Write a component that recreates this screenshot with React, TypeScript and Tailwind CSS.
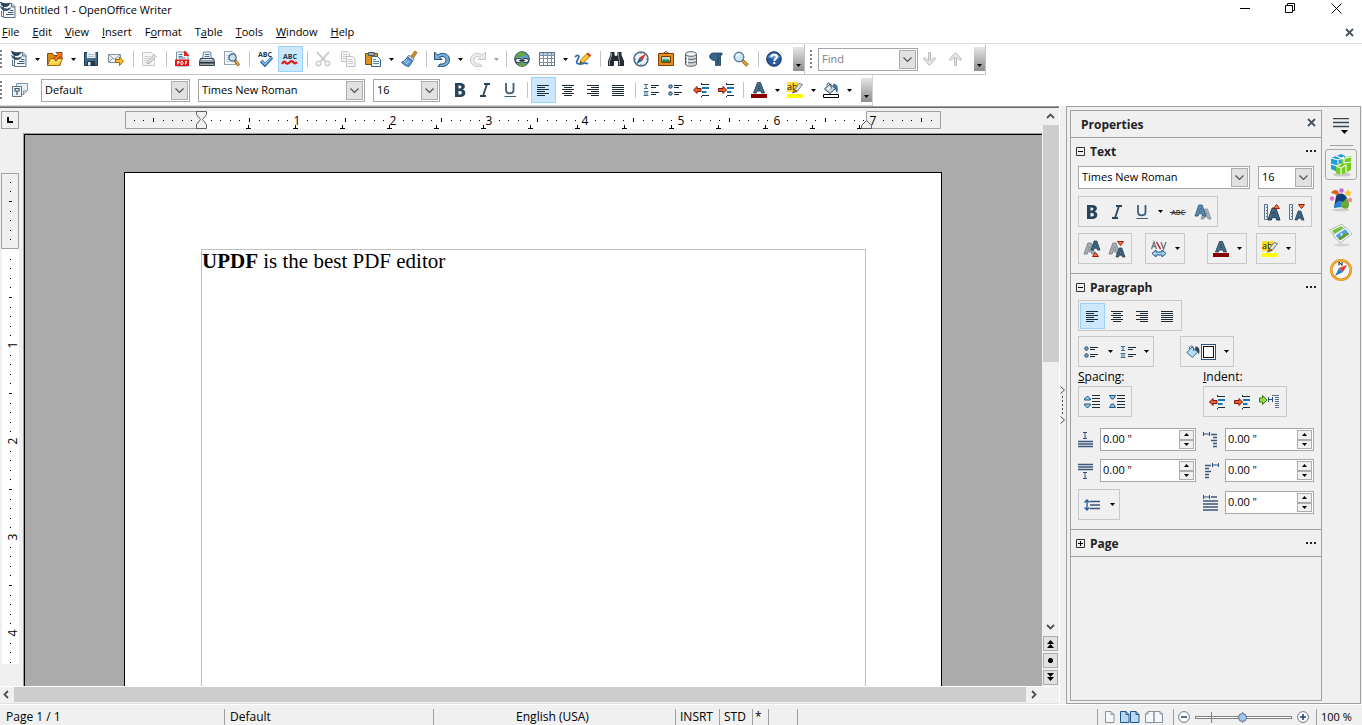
import { useState } from "react";
import type { ReactNode } from "react";
import clsx from "clsx";

const NAVY = "#28455c";
const INK = "#1c2b36";

const Svg = ({ children, w = 16, h = 16 }: { children: ReactNode; w?: number; h?: number }) => (
  <svg width={w} height={h} viewBox={`0 0 ${w} ${h}`} fill="none" className="shrink-0 overflow-visible">
    {children}
  </svg>
);

/* ---------- icons ---------- */

const WriterIcon = () => (
  <Svg>
    <path d="M3.5 1.500h8.500l3 3v11H3.500z" fill="#f4f7f9" stroke="#5b7186" />
    <path d="M11.500 1.500v3.500H15" fill="#c6d3dd" stroke="#5b7186" />
    <path d="M0 0c3 0 4 2 6 2s3-1 4-1c0 2-2 4-5 4C2 5 1 3 0 0z" fill="#2c4457" />
    <path d="M0 4c2 0 3 2.500 6 2.500S10 5 11 5.500c-1 2.500-3 4-6 3.500C2 8.500 1 7 0 4z" fill="#3a566c" />
    <path d="M10 8.500h3.500M8 10.500h5.500M6 12.500h7.500" stroke="#3e5b73" />
    <path d="M1.500 9v5.500h2" stroke="#5b7186" />
  </Svg>
);

const FolderIcon = () => (
  <Svg>
    <path d="M.5 14.500v-12h5l1.500 2h6v10z" fill="#d98c12" stroke="#8a4b08" />
    <path d="M.5 14.500l3-7h12l-3 7z" fill="#ffd34a" stroke="#a8640c" />
    <path d="M2.500 13.500l1.500-4h9" stroke="#fff0a0" />
    <path d="M6.500 8l4.500-4.500-2-2h6v6l-2-2L9 10z" fill="#f47b20" stroke="#8a2a08" strokeWidth=".8" />
  </Svg>
);

const SaveIcon = () => (
  <Svg>
    <path d="M1.500 1.500h13v13h-13z" fill="#446a8a" stroke="#1d3750" />
    <path d="M4 1h8.500v6H4z" fill="#eef3f7" />
    <path d="M5 3.500h6.500M5 5.500h6.500" stroke="#b4c2ce" />
    <path d="M4 10h8v5H4z" fill="#20384e" />
    <path d="M5 11h2.500v3.500H5z" fill="#e9eff4" />
  </Svg>
);

const MailIcon = () => (
  <Svg>
    <path d="M.5 3.500h12v8H.5z" fill="#eef2f5" stroke="#8493a0" />
    <path d="M.5 3.500l6 5 6-5M.5 11.500l4-4M12.500 11.500l-4-4" stroke="#8493a0" />
    <path d="M7.500 8.500h4V6l4 4.200-4 4.300v-3h-4z" fill="#ffbe2e" stroke="#9c5a06" strokeWidth=".9" />
  </Svg>
);

const EditIcon = () => (
  <Svg>
    <path d="M1.500 1.500h9l3 3v10h-12z" fill="#f6f6f6" stroke="#cacaca" />
    <path d="M3.500 5.500h6M3.500 7.500h5M3.500 9.500h3M3.500 11.500h3" stroke="#d2d2d2" />
    <path d="M6 13l1-3 6-6.500 2 2L9 12z" fill="#ddd" stroke="#b5b5b5" />
  </Svg>
);

const PdfIcon = () => (
  <Svg>
    <path d="M2.500 1h8l3.500 3.500V15H2.500z" fill="#f5f8fa" stroke="#7791a6" />
    <path d="M10 0h1.500L15 4v1h-5z" fill="#d92a2a" />
    <path d="M4.500 3.500h4M4.500 5.500h4M4.500 7h7" stroke="#4878a0" />
    <path d="M1 8.500h14V15H1z" fill="#e01515" />
    <path d="M3.500 13.500v-3H5v1.500H3.500M7 10.500v3h1.500l.5-1v-1l-.5-1zM11.500 13.500v-3H13M11.500 12H13" stroke="#fff" />
  </Svg>
);

const PrinterIcon = () => (
  <Svg>
    <path d="M3.500 8l1-7h7l1 7z" fill="#e7f0f7" stroke="#6b8599" />
    <path d="M6 3.500h4.500M5.500 5.500h5" stroke="#4478a8" />
    <path d="M1.500 7.500h13l1 3v4H.5v-4z" fill="#9aa3ab" stroke="#3a464f" />
    <path d="M1 11h14v1.500H1z" fill="#29343c" />
    <path d="M12 13h2v1h-2z" fill="#9be04a" />
    <path d="M3 8.500h10" stroke="#dfe4e8" />
  </Svg>
);

const PreviewIcon = () => (
  <Svg>
    <path d="M.5.5h8l3 3v10H.5z" fill="#f5f8fa" stroke="#8fa0ae" />
    <path d="M2.500 4.500h3M2.500 6.500h2M2.500 8.500h2M2.500 10.500h3" stroke="#b4c4d0" />
    <circle cx="8.500" cy="6.500" r="3.600" fill="#c5e0f3" stroke="#47657e" strokeWidth="1.300" />
    <path d="M11 9.500l4 5" stroke="#8a5a14" strokeWidth="3" />
    <path d="M11.500 9.800l3.300 4.200" stroke="#e9b94a" strokeWidth="1.300" />
  </Svg>
);

const AbcIcon = ({ wave }: { wave?: boolean }) => (
  <Svg>
    <text x="8" y={wave ? 8 : 6} fontSize="7" fontWeight="700" textAnchor="middle" fill="#20384e" fontFamily="Open Sans, sans-serif">
      ABC
    </text>
    {wave ? (
      <path d="M0 13c2-4 3-2 4-1s2 1 4-1 3 0 4 1 2 0 3-1" stroke="#e01a10" strokeWidth="2.200" />
    ) : (
      <>
        <path d="M4 10l4 4 7-7.500" stroke="#1d5d9c" strokeWidth="3.200" />
        <path d="M4.500 10.300L8 13.600l6.500-7" stroke="#8cc4f4" strokeWidth="1.400" />
      </>
    )}
  </Svg>
);

const CutIcon = () => (
  <Svg>
    <path d="M2 1l9 10M14 1L5 11" stroke="#c6c6c6" strokeWidth="1.800" />
    <circle cx="3.500" cy="12.500" r="2.200" stroke="#cdcdcd" strokeWidth="1.500" />
    <circle cx="12.500" cy="12.500" r="2.200" stroke="#cdcdcd" strokeWidth="1.500" />
  </Svg>
);

const CopyIcon = () => (
  <Svg>
    <path d="M1.500.5h6l2 2v8h-8z" fill="#f5f5f5" stroke="#c8c8c8" />
    <path d="M3 3.500h4M3 5.500h4M3 7.500h3" stroke="#d0d0d0" />
    <path d="M6.500 5.500h6l2.500 2.500v7.500H6.500z" fill="#f8f8f8" stroke="#c0c0c0" />
    <path d="M8 8.500h4M8 10.500h5M8 12.500h5" stroke="#cacaca" />
  </Svg>
);

const PasteIcon = () => (
  <Svg>
    <path d="M.5 2.500h12v11H.5z" fill="#d99422" stroke="#7d4b08" />
    <path d="M3.500 1.500h6v3h-6z" fill="#9aa5ad" stroke="#4b565e" />
    <path d="M6.500 5.500h6l3 3v7h-9z" fill="#eff6fb" stroke="#44647e" />
    <path d="M8 8.500h3M8 10.500h6M8 12.500h6" stroke="#5d8bb0" />
  </Svg>
);

const BrushIcon = () => (
  <Svg>
    <path d="M10 5l4-5 2 1.500L12.500 7z" fill="#d98f25" stroke="#7d4a08" strokeWidth=".7" />
    <path d="M8 4l5 4-1.500 2L6.500 6z" fill="#c9d3da" stroke="#5c6b76" strokeWidth=".7" />
    <path d="M6.500 6l5 4-3.500 5.500c-2 0-5-1-7.500-4.500 2 0 4-2 6-5z" fill="#5b9bd8" stroke="#1e5083" strokeWidth=".9" />
    <path d="M3 11l3-2M5 13l3-3" stroke="#bddcf5" />
  </Svg>
);

const UndoIcon = ({ off }: { off?: boolean }) => (
  <svg width="16" height="16" viewBox="0 0 16 16" fill="none" className={clsx("shrink-0", off && "-scale-x-100")}>
    <path
      d="M.5 1v7.500H8L5.500 6c3-1.500 6.500 0 6.500 3s-3 4.500-6 4L4 15.500c6 1 11.500-1 11.500-7C15.500 3 9 .5 3.500 4z"
      fill={off ? "#ececec" : "#78afdc"}
      stroke={off ? "#c6c6c6" : "#1d4b74"}
    />
  </svg>
);

const GlobeIcon = () => (
  <Svg>
    <circle cx="8" cy="8" r="7.300" fill="#5f9cc8" stroke="#23445c" />
    <path d="M3 3c2-2 6-2.500 9 0l-1 2-3-1-2 2-4 1zM4 14c3 2 6 1 8 0l-2-2-4-1z" fill="#67a838" />
    <rect x="1.500" y="7.500" width="6" height="4" rx="2" fill="#e8edf1" stroke="#27333d" />
    <rect x="8.500" y="7.500" width="6" height="4" rx="2" fill="#e8edf1" stroke="#27333d" />
    <path d="M5 9.500h6" stroke="#27333d" />
  </Svg>
);

const TableIcon = () => (
  <Svg>
    <path d="M.5 1.500h15v13H.5z" fill="#fff" stroke="#5c7389" />
    <path d="M1 2h14v2.500H1z" fill="#b9cddd" />
    <path d="M.5 4.500h15M.5 7.500h15M.5 11.500h15M4.500 2v12M8.500 2v12M12.500 2v12" stroke="#7c91a4" />
  </Svg>
);

const DrawIcon = () => (
  <Svg>
    <path d="M0 6c3-3 5-1 3 2s-2 5 2 5 5-2 8 0" stroke="#2a6fb3" strokeWidth="1.800" />
    <path d="M5 12l1-3.500L12.500 2l3 3L8.500 11.500z" fill="#ffc62e" stroke="#a05a08" strokeWidth=".8" />
    <path d="M11.500 3l3 3 1.500-1.500-2.500-3z" fill="#e33a24" />
    <path d="M5 12l.5-2 1.500 1.500z" fill="#222" />
  </Svg>
);

const BinocularsIcon = () => (
  <Svg>
    <path d="M2.500 1h4v3l1 1h1l1-1V1h4v3l2.500 6v5H10v-5H6v5H0v-5l2.500-6z" fill="#252d33" />
    <path d="M3.500 2v3l-2 5v4M10.500 2v3l1 5v4" stroke="#8d9aa4" />
  </Svg>
);

const CompassIcon = () => (
  <Svg>
    <circle cx="8" cy="8" r="7" fill="#eaf3fa" stroke="#53697a" strokeWidth="1.500" />
    <path d="M13 2.500L6.500 6.500l3 3z" fill="#e1301c" />
    <path d="M3 13.500L6.500 6.500l3 3z" fill="#2864a0" />
    <path d="M8 1.500v1.500M8 13v1.500M1.500 8H3M13 8h1.500" stroke="#53697a" />
  </Svg>
);

const PictureIcon = () => (
  <Svg>
    <path d="M5 2.500L8 .5l3 2" stroke="#6b3b08" />
    <path d="M.5 2.500h15v12H.5z" fill="#e98c1c" stroke="#7d3d05" />
    <path d="M3.500 5.500h9v6h-9z" fill="#aadcf8" stroke="#7d3d05" />
    <path d="M4 11V9.500l2-1.500 2 1 2-1 2 2v1z" fill="#2f8a3a" />
    <path d="M9 6h2v1.500H9z" fill="#ffe14d" />
  </Svg>
);

const DatabaseIcon = () => (
  <Svg>
    <path d="M2.500 3v10c0 3 11 3 11 0V3" fill="#d5d9dc" stroke="#59646c" />
    <ellipse cx="8" cy="3" rx="5.500" ry="2.300" fill="#f3f5f6" stroke="#59646c" />
    <path d="M2.500 6.500c0 2.500 11 2.500 11 0M2.500 10c0 2.500 11 2.500 11 0" stroke="#59646c" />
    <path d="M4.500 6v8" stroke="#fff" />
  </Svg>
);

const PilcrowIcon = () => (
  <Svg>
    <path d="M14 2v2h-1.500v10.500h-2V4H9.500v10.500h-2V9.500C0 9.500 0 2 6 2z" fill="#34658f" stroke="#1c3a55" strokeWidth=".8" />
  </Svg>
);

const ZoomIcon = () => (
  <Svg>
    <circle cx="6" cy="6" r="4.700" fill="#cbe6f8" stroke="#5d7e99" strokeWidth="1.500" />
    <path d="M3.500 5.500c.5-1.500 1.500-2 3-2" stroke="#fff" strokeWidth="1.300" />
    <path d="M9.500 9.500l5 5" stroke="#9a5e0c" strokeWidth="3.200" />
    <path d="M10 10l4.300 4.300" stroke="#f0b63c" strokeWidth="1.500" />
  </Svg>
);

const HelpIcon = () => (
  <Svg>
    <circle cx="8" cy="8" r="7.300" fill="#285c9e" stroke="#122f5c" />
    <path d="M2 6c1-4 11-4 12 0-3 2-9 2-12 0z" fill="#6f9fd3" />
    <path d="M5.500 6c0-3.500 5.300-3 5.300 0 0 2-2.500 2-2.500 4M8.300 11v2" stroke="#fff" strokeWidth="2" />
  </Svg>
);

const FindArrow = ({ up }: { up?: boolean }) => (
  <svg width="16" height="16" viewBox="0 0 16 16" fill="none" className={clsx("shrink-0", up && "rotate-180")}>
    <path d="M6.500 1.500h2v8l4-3 1 1.500-6 6.500L1.500 8l1-1.500 4 3z" fill="#e6e6e6" stroke="#bcbcbc" />
  </svg>
);

const StylesIcon = () => (
  <Svg>
    <path d="M4.500 1.500h11v7l-4 4h-7z" fill="#e9f0f5" stroke="#8396a5" />
    <path d="M15 9h-3.500v3.500" stroke="#8396a5" />
    <path d="M.5 4.500h9v10h-9z" fill="#eef3f6" stroke="#5e7588" />
    <path d="M3 6.500h4v2.500H3zM5 9v4" stroke="#3d566a" strokeWidth="1.200" />
  </Svg>
);

const BoldIcon = () => (
  <Svg>
    <path
      d="M3 1h5.500C14 1 14 6.500 10.500 7.500 15 8.500 14 15 8.500 15H3zM6.500 3.500v3h1c2.500 0 2.500-3 0-3zM6.500 9v3.500h1.500c2.500 0 2.500-3.500 0-3.500z"
      fillRule="evenodd"
      fill={NAVY}
    />
  </Svg>
);

const ItalicIcon = () => (
  <Svg>
    <path d="M7 2h6M3 14h6M10 2L6 14" stroke={NAVY} strokeWidth="1.800" />
  </Svg>
);

const UnderlineIcon = () => (
  <Svg>
    <path d="M4 1v7c0 4.500 7.500 4.500 7.500 0V1" stroke="#3f5f78" strokeWidth="1.800" />
    <path d="M2.500 14.500H14" stroke="#3f5f78" />
  </Svg>
);

type Align = "left" | "center" | "right" | "justify";

// every second line is a short one
const shortLine: Record<Align, [number, number]> = {
  left: [2, 10],
  center: [4, 12],
  right: [6, 14],
  justify: [2, 14],
};

const AlignIcon = ({ kind }: { kind: Align }) => (
  <Svg>
    {[0, 1, 2, 3, 4, 5].map((i) => {
      const [a, b] = i % 2 ? shortLine[kind] : [2, 14];
      return <path key={i} d={`M${a} ${3.5 + i * 2}H${b}`} stroke={INK} />;
    })}
  </Svg>
);

const NumberingIcon = () => (
  <Svg>
    <path d="M1 2.500h4M3 2.500v4M1 6.500h4M.5 9.500h5M.5 13.500h5M2 9.500v4M4 9.500v4" stroke="#3f7094" />
    <path d="M8 3.500h8M8 5.500h5M8 10.500h8M8 12.500h5" stroke={INK} />
  </Svg>
);

const BulletsIcon = () => (
  <Svg>
    <circle cx="2.500" cy="4.500" r="1.700" fill="#7fb4d6" stroke="#1e3d55" />
    <circle cx="2.500" cy="11.500" r="1.700" fill="#7fb4d6" stroke="#1e3d55" />
    <path d="M6 3.500h8M6 5.500h5M6 10.500h8M6 12.500h5" stroke={INK} />
  </Svg>
);

const IndentIcon = ({ right }: { right?: boolean }) => (
  <Svg>
    <path d="M8 2.500h8M9 13.500h7M8.500 1v1M8.500 14v1.500" stroke={INK} />
    <path d="M9 5h7v2H9zM9 9h4.500v2H9z" fill="#1278b8" />
    <path d={right ? "M8.500 8L5 4.500v2H.5v3H5v2z" : "M.5 8L4 4.500v2h4v3H4v2z"} fill="#e9622c" stroke="#7d1508" />
  </Svg>
);

const FontColorIcon = () => (
  <Svg>
    <path
      d="M2.500 11L6.500.5h3L13.500 11h-3l-.6-2H6l-.6 2zM7 6.500h2L8 3.500z"
      fillRule="evenodd"
      fill="#46708f"
      stroke="#1e3a50"
      strokeWidth=".8"
    />
    <path d="M0 12h16v4H0z" fill="#870000" />
  </Svg>
);

const HighlightIcon = () => (
  <Svg>
    <path d="M0 0h11v10H0z" fill="#ffdc32" />
    <text x="0" y="8" fontSize="9" fill="#111" fontFamily="Open Sans, sans-serif">
      ab
    </text>
    <path d="M7 8l5-6.500 3.500 1L10.500 9z" fill="#dde3e7" stroke="#5c6872" strokeWidth=".9" />
    <path d="M5.500 11l2-3.500 2.500 2z" fill="#c87a1e" stroke="#5a3108" strokeWidth=".7" />
    <path d="M0 12h16v4H0z" fill="#ff0" />
  </Svg>
);

const FillIcon = () => (
  <Svg>
    <path d="M10.500 2c4 0 4.500 4 3.500 8.500-1-2-1-4-3-4z" fill="#2f7cc0" stroke="#1b4a75" strokeWidth=".6" />
    <path d="M7 2l5.500 4.500L7 11.500 1.500 7z" fill="#c3d0da" stroke="#394b59" />
    <path d="M3.500 7L7 4l1.500 1.200L5 8.500z" fill="#f4f8fa" />
    <path d="M4 3.500c0-4 5-3 4 3" stroke="#394b59" />
    <path d="M.5 12.500h15v3H.5z" fill="#fff" stroke="#000" />
  </Svg>
);

const ParaFillIcon = () => (
  <Svg w={30} h={18}>
    <path d="M9.500 3.500c4 0 4.500 4 3.500 8-1-2-2-4-4-4z" fill="#333f49" />
    <path d="M6 4l5.500 5-5 5.500L.8 9.500z" fill="#b7dcf3" stroke="#3a6a92" />
    <path d="M3.500 6c0-5 5-4 4 2" stroke="#3a6a92" />
    <rect x="15.500" y="1.500" width="14" height="15" fill="#fff" stroke="#2c4f86" />
    <rect x="17.500" y="3.500" width="10" height="11" fill="#fff" stroke="#111" />
  </Svg>
);

const StrikeIcon = () => (
  <Svg>
    <text x="8" y="11" fontSize="7" fontWeight="600" textAnchor="middle" fill="#333" fontFamily="Open Sans, sans-serif">
      ABC
    </text>
    <path d="M0 8.500h16" stroke="#333" />
  </Svg>
);

const LetterShape = ({ x, y, s, fill, stroke }: { x: number; y: number; s: number; fill: string; stroke: string }) => (
  <path
    transform={`translate(${x} ${y}) scale(${s / 10})`}
    d="M0 10L3.500 0h3L10 10H7.200l-.6-2H3.400l-.6 2zM4 6h2L5 3z"
    fillRule="evenodd"
    fill={fill}
    stroke={stroke}
    strokeWidth=".8"
  />
);

const ShadowIcon = () => (
  <Svg>
    <LetterShape x={6} y={5} s={10} fill="#a9b1b8" stroke="#7f8992" />
    <LetterShape x={0} y={1} s={11} fill="#5b8cb4" stroke="#2e5678" />
  </Svg>
);

const GrowIcon = ({ shrink }: { shrink?: boolean }) => (
  <Svg>
    <path d="M.5.500h3v15h-3z" fill="#e4eef4" stroke="#5b7386" />
    <path d="M2 3.500h1.500M2 6.500h1.500M2 9.500h1.500M2 12.500h1.500" stroke="#5b7386" />
    {shrink ? (
      <>
        <LetterShape x={6} y={7} s={9} fill="#3c6787" stroke="#1a364b" />
        <path d="M9.500.5h6l-3 4z" fill="#f4783c" stroke="#9c1c08" />
      </>
    ) : (
      <>
        <LetterShape x={4} y={4} s={12} fill="#3c6787" stroke="#1a364b" />
        <path d="M9.500 4.500l3-4 3 4z" fill="#f4783c" stroke="#9c1c08" />
      </>
    )}
  </Svg>
);

const ScriptIcon = ({ sub }: { sub?: boolean }) => (
  <Svg>
    <LetterShape x={0} y={2} s={11} fill="#a6adb3" stroke="#78828a" />
    <LetterShape x={7} y={sub ? 7 : 0} s={9} fill="#3c6787" stroke="#1a364b" />
    <path d={sub ? "M8.500.5h6l-3 4z" : "M8.500 15.500l3-4 3 4z"} fill="#f4783c" stroke="#9c1c08" />
  </Svg>
);

const SpacingIcon = () => (
  <Svg>
    <path d="M.5 8L3 1l2.500 7M1.500 5.500h3M10 1l2.500 7L15 1" stroke="#6b7780" strokeWidth="1.300" />
    <path d="M5.500 1l4 7" stroke="#c01818" strokeWidth="1.500" />
    <path d="M1 12.500l4-3.500v2h6V9l4 3.500-4 3.500v-2H5v2z" fill="#a9d2f2" stroke="#1f568a" />
  </Svg>
);

const ParaGapIcon = ({ shrink }: { shrink?: boolean }) => (
  <Svg>
    <path d="M8 1.500h8M8 4.500h8M8 7.500h8M8 10.500h8M8 13.500h8" stroke={INK} />
    <path
      d={shrink ? "M.5 1.500h6L4.500 5h-2zM.5 13.500h6L4.500 10h-2z" : "M.5 6h6V5L3.500 2l-3 3zM.5 10h6v1l-3 3-3-3z"}
      fill="#8cc8ea"
      stroke="#1d5580"
    />
  </Svg>
);

const HangingIcon = () => (
  <Svg w={20}>
    <path d="M.5 4h3V1.500L8 6l-4.500 4.500V8h-3z" fill="#9ad850" stroke="#3c7a12" />
    <path d="M9.500 3v5M13.500 3v5M9.500 5.500h4" stroke="#2a4f80" />
    <path d="M13 1.500h7M16 3.500h4M16 5.500h4M16 7.500h4M16 9.500h4M16 11.500h4M16 13.500h4" stroke="#56708c" />
  </Svg>
);

const AboveIcon = ({ below }: { below?: boolean }) => (
  <svg width="16" height="16" viewBox="0 0 16 16" fill="none" className={clsx("shrink-0", below && "-scale-y-100")}>
    <path d="M5 .5h4M5 6.500h4M7 .5v6" stroke="#2c4f86" />
    <path d="M0 9.500h15M0 12h15M0 14.500h15" stroke="#3c5678" strokeWidth="1.400" />
  </svg>
);

const BeforeTextIcon = ({ after }: { after?: boolean }) => (
  <svg width="16" height="16" viewBox="0 0 16 16" fill="none" className={clsx("shrink-0", after && "-scale-x-100")}>
    <path d="M.5 0v4M6.500 0v4M.5 2h6" stroke="#2c4f86" />
    <path d="M8 2.500h6M10 5.500h4M8 8.500h6M10 11.500h4M10 14.500h4" stroke="#3c5678" strokeWidth="1.500" />
  </svg>
);

const FirstLineIcon = () => (
  <Svg>
    <path d="M.5 0v4M6.500 0v4M.5 2h6" stroke="#2c4f86" />
    <path d="M8 2h6M0 6h15M0 9h15M0 12h15M0 15h15" stroke="#3c5678" strokeWidth="1.400" />
  </Svg>
);

const LineGapIcon = () => (
  <Svg>
    <path d="M3 2.500v11M.5 5.500L3 3l2.500 2.500M.5 10.500L3 13l2.500-2.500" stroke="#2c5f9a" strokeWidth="1.400" />
    <path d="M6 4.500h10M6 8h10M6 11.500h10" stroke="#3c5678" strokeWidth="1.500" />
  </Svg>
);

const Chevron = ({ dir = "down" }: { dir?: "down" | "up" | "left" | "right" }) => (
  <svg
    width="9"
    height="9"
    viewBox="0 0 9 9"
    fill="none"
    className={clsx("shrink-0", dir === "up" && "rotate-180", dir === "left" && "rotate-90", dir === "right" && "-rotate-90")}
  >
    <path d="M1 3l3.500 3.500L8 3" stroke="#505050" strokeWidth="1.800" />
  </svg>
);

const CloseX = () => (
  <svg width="9" height="9" viewBox="0 0 9 9">
    <path d="M1 1l7 7M8 1L1 8" stroke="#46525e" strokeWidth="1.800" />
  </svg>
);

/* ---------- controls ---------- */

type BtnProps = { label: string; children: ReactNode; active?: boolean; onClick?: () => void; width?: string };

const ToolButton = ({ label, children, active, onClick, width = "w-[25px]" }: BtnProps) => (
  <button
    type="button"
    aria-label={label}
    aria-pressed={active}
    onClick={onClick}
    className={clsx(
      "flex h-[26px] shrink-0 items-center border pl-[3px]",
      width,
      active ? "border-[#99d1ff] bg-[#cce8ff]" : "border-transparent hover:bg-[#e5f3ff]"
    )}
  >
    {children}
  </button>
);

const MenuArrow = ({ label, off }: { label: string; off?: boolean }) => (
  <button type="button" aria-label={label} className="flex h-[26px] w-[11px] shrink-0 items-center justify-center">
    <svg width="5" height="3" viewBox="0 0 5 3">
      <path d="M0 0h5L2.500 3z" fill={off ? "#a0a0a0" : "#000"} />
    </svg>
  </button>
);

const Sep = () => (
  <span className="flex w-2 shrink-0 justify-center">
    <span className="h-4 w-px bg-[#c4c4c4]" />
  </span>
);

const Grip = ({ className = "" }: { className?: string }) => (
  <span className={clsx("h-[18px] w-0.5 shrink-0 bg-[repeating-linear-gradient(#808080_0_2px,transparent_2px_4px)]", className)} />
);

const Overflow = () => (
  <button
    type="button"
    aria-label="More controls"
    className="flex h-6 w-[11px] shrink-0 items-end justify-center bg-linear-to-b from-[#e6e6e6] to-[#8e8e8e] pb-1"
  >
    <svg width="5" height="3" viewBox="0 0 5 3">
      <path d="M0 0h5L2.500 3z" fill="#000" />
    </svg>
  </button>
);

type ComboProps = { label: string; options: string[]; className: string; muted?: boolean };

const Combo = ({ label, options, className, muted }: ComboProps) => (
  <div className={clsx("relative h-[23px] shrink-0 border border-[#a5a7ac] bg-white", className)}>
    <select
      aria-label={label}
      className={clsx("h-full w-full appearance-none bg-transparent pr-5 pl-[3px] text-[11px] outline-none", muted && "text-[#808080]")}
    >
      {options.map((o) => (
        <option key={o}>{o}</option>
      ))}
    </select>
    <span className="pointer-events-none absolute inset-y-px right-px flex w-[17px] items-center justify-center border border-[#adadad] bg-[#e1e1e1]">
      <svg width="9" height="6" viewBox="0 0 9 6" fill="none">
        <path d="M.5.5l4 4 4-4" stroke="#505050" strokeWidth="1.200" />
      </svg>
    </span>
  </div>
);

const Group = ({ children }: { children: ReactNode }) => (
  <div className="flex h-[31px] w-fit shrink-0 items-center border border-[#c8c8c8] px-px">{children}</div>
);

const Spinner = ({ label, icon }: { label: string; icon: ReactNode }) => {
  const [value, setValue] = useState(0);
  return (
    <div className="flex items-center gap-1.5">
      {icon}
      <div className="flex h-[23px] min-w-0 flex-1 border border-[#a5a7ac] bg-white p-px">
        <input
          aria-label={label}
          value={`${value.toFixed(2)} "`}
          readOnly
          className="w-0 min-w-0 flex-1 pl-px text-[11px] outline-none"
        />
        <div className="flex w-[15px] flex-col">
          {[1, -1].map((step) => (
            <button
              key={step}
              type="button"
              aria-label={`${label} ${step > 0 ? "up" : "down"}`}
              onClick={() => setValue(Math.max(0, value + step * 0.1))}
              className="flex min-h-0 flex-1 items-center justify-center border border-[#adadad] bg-[#f0f0f0]"
            >
              <svg width="5" height="3" viewBox="0 0 5 3">
                <path d={step > 0 ? "M0 3h5L2.500 0z" : "M0 0h5L2.500 3z"} fill="#000" />
              </svg>
            </button>
          ))}
        </div>
      </div>
    </div>
  );
};

const aligns: { kind: Align; label: string }[] = [
  { kind: "left", label: "Align Left" },
  { kind: "center", label: "Centered" },
  { kind: "right", label: "Align Right" },
  { kind: "justify", label: "Justified" },
];

type AlignProps = { align: Align; setAlign: (a: Align) => void };

const AlignButtons = ({ align, setAlign }: AlignProps) =>
  aligns.map((a) => (
    <ToolButton key={a.kind} label={a.label} active={align === a.kind} onClick={() => setAlign(a.kind)}>
      <AlignIcon kind={a.kind} />
    </ToolButton>
  ));

/* ---------- top bars ---------- */

const menus = ["File", "Edit", "View", "Insert", "Format", "Table", "Tools", "Window", "Help"];
const accessKeys: Record<string, number> = { Format: 1, Table: 1 };

const TitleBar = () => (
  <header className="flex h-[22px] shrink-0 items-start justify-between">
    <div className="flex items-center gap-[3px]">
      <WriterIcon />
      <h1 className="text-[11px] leading-5">Untitled 1 - OpenOffice Writer</h1>
    </div>
    <div className="flex">
      <button type="button" aria-label="Minimize" className="flex h-4 w-12 items-center justify-center">
        <span className="h-px w-2.5 bg-black" />
      </button>
      <button type="button" aria-label="Restore" className="flex h-4 w-[42px] items-center justify-center">
        <svg width="10" height="10" viewBox="0 0 10 10" fill="none" stroke="#000">
          <path d="M.5 2.500h7v7h-7zM2.500 2.500v-2h7v7h-2" />
        </svg>
      </button>
      <button type="button" aria-label="Close" className="flex h-4 w-[51px] items-center justify-center">
        <svg width="11" height="11" viewBox="0 0 11 11" stroke="#000">
          <path d="M.5.5l10 10M10.500.5l-10 10" />
        </svg>
      </button>
    </div>
  </header>
);

const MenuBar = () => (
  <nav className="flex h-[22px] shrink-0 items-center justify-between border-b border-[#dcdcdc] pr-2 pl-0.5">
    <div className="flex gap-[13px] text-[11px]">
      {menus.map((m) => {
        const k = accessKeys[m] ?? 0;
        return (
          <button key={m} type="button">
            {m.slice(0, k)}
            <span className="underline">{m[k]}</span>
            {m.slice(k + 1)}
          </button>
        );
      })}
    </div>
    <button type="button" aria-label="Close Document">
      <CloseX />
    </button>
  </nav>
);

const StandardBar = () => {
  const [autoSpell, setAutoSpell] = useState(true);
  return (
    <div className="flex h-[31px] shrink-0">
      <div className="flex items-center border-r border-b border-[#c4c4c4]">
        <Grip className="mr-[5px]" />
        <ToolButton label="New"><WriterIcon /></ToolButton>
        <MenuArrow label="New menu" />
        <ToolButton label="Open"><FolderIcon /></ToolButton>
        <MenuArrow label="Open menu" />
        <ToolButton label="Save"><SaveIcon /></ToolButton>
        <ToolButton label="Document as E-mail"><MailIcon /></ToolButton>
        <Sep />
        <ToolButton label="Edit File"><EditIcon /></ToolButton>
        <Sep />
        <ToolButton label="Export as PDF"><PdfIcon /></ToolButton>
        <ToolButton label="Print"><PrinterIcon /></ToolButton>
        <ToolButton label="Page Preview"><PreviewIcon /></ToolButton>
        <Sep />
        <ToolButton label="Spelling and Grammar"><AbcIcon /></ToolButton>
        <ToolButton label="AutoSpellcheck" active={autoSpell} onClick={() => setAutoSpell(!autoSpell)}>
          <AbcIcon wave />
        </ToolButton>
        <Sep />
        <ToolButton label="Cut"><CutIcon /></ToolButton>
        <ToolButton label="Copy"><CopyIcon /></ToolButton>
        <ToolButton label="Paste"><PasteIcon /></ToolButton>
        <MenuArrow label="Paste menu" />
        <ToolButton label="Format Paintbrush"><BrushIcon /></ToolButton>
        <Sep />
        <ToolButton label="Undo"><UndoIcon /></ToolButton>
        <MenuArrow label="Undo menu" />
        <ToolButton label="Redo"><UndoIcon off /></ToolButton>
        <MenuArrow label="Redo menu" off />
        <Sep />
        <ToolButton label="Hyperlink"><GlobeIcon /></ToolButton>
        <ToolButton label="Table"><TableIcon /></ToolButton>
        <MenuArrow label="Table menu" />
        <ToolButton label="Show Draw Functions"><DrawIcon /></ToolButton>
        <Sep />
        <ToolButton label="Find and Replace"><BinocularsIcon /></ToolButton>
        <ToolButton label="Navigator"><CompassIcon /></ToolButton>
        <ToolButton label="Gallery"><PictureIcon /></ToolButton>
        <ToolButton label="Data Sources"><DatabaseIcon /></ToolButton>
        <ToolButton label="Nonprinting Characters"><PilcrowIcon /></ToolButton>
        <ToolButton label="Zoom"><ZoomIcon /></ToolButton>
        <Sep />
        <ToolButton label="Help"><HelpIcon /></ToolButton>
        <span className="w-1.5" />
        <Overflow />
      </div>
      <div className="flex items-center border-r border-b border-[#c4c4c4] pl-[5px]">
        <Grip className="mr-1.5" />
        <div className="pt-px">
          <Combo label="Find" options={["Find"]} className="w-[100px]" muted />
        </div>
        <ToolButton label="Find Next"><FindArrow /></ToolButton>
        <ToolButton label="Find Previous"><FindArrow up /></ToolButton>
        <span className="w-1.5" />
        <Overflow />
      </div>
    </div>
  );
};

const FormattingBar = ({ align, setAlign }: AlignProps) => (
  <div className="flex h-[31px] shrink-0">
    <div className="flex items-center border-r border-b border-[#d4d4d4]">
      <Grip className="mr-1.5" />
      <ToolButton label="Styles and Formatting"><StylesIcon /></ToolButton>
      <div className="flex gap-2 px-2 pt-px">
        <Combo label="Apply Style" options={["Default"]} className="w-[149px]" />
        <Combo label="Font Name" options={["Times New Roman"]} className="w-[167px]" />
        <Combo label="Font Size" options={["16"]} className="w-[67px]" />
      </div>
      <ToolButton label="Bold"><BoldIcon /></ToolButton>
      <ToolButton label="Italic"><ItalicIcon /></ToolButton>
      <ToolButton label="Underline"><UnderlineIcon /></ToolButton>
      <Sep />
      <AlignButtons align={align} setAlign={setAlign} />
      <Sep />
      <ToolButton label="Numbering On/Off"><NumberingIcon /></ToolButton>
      <ToolButton label="Bullets On/Off"><BulletsIcon /></ToolButton>
      <ToolButton label="Decrease Indent"><IndentIcon /></ToolButton>
      <ToolButton label="Increase Indent"><IndentIcon right /></ToolButton>
      <Sep />
      <ToolButton label="Font Color"><FontColorIcon /></ToolButton>
      <MenuArrow label="Font Color menu" />
      <ToolButton label="Highlighting"><HighlightIcon /></ToolButton>
      <MenuArrow label="Highlighting menu" />
      <ToolButton label="Background Color"><FillIcon /></ToolButton>
      <MenuArrow label="Background Color menu" />
      <span className="w-1.5" />
      <Overflow />
    </div>
  </div>
);

/* ---------- document ---------- */

const INCH = 96;

const tenths = (from: number, to: number) => {
  const list: number[] = [];
  for (let i = from; i <= to; i++) list.push(i);
  return list;
};

const HorizontalRuler = () => (
  <svg width="816" height="19" viewBox="0 0 816 19" className="shrink-0" fontSize="12">
    <path d="M76 0h666v18H76z" fill="#fff" />
    <path d="M.5.500h76v17H.5zM741.500.500h74v17h-74z" fill="#f0f0f0" stroke="#a0a0a0" />
    {tenths(-7, 76).map((i) => {
      const x = Math.round(76 + (i * INCH) / 10);
      if (i % 10 === 0)
        return i > 0 ? (
          <text key={i} x={x} y="14" textAnchor="middle">
            {i / 10}
          </text>
        ) : null;
      return i % 5 === 0 ? <path key={i} d={`M${x} 7h1v4h-1z`} /> : <path key={i} d={`M${x} 9h1v1h-1z`} />;
    })}
    {tenths(1, 14).map((i) => (
      <path key={i} d={`M${76 + i * 47} 14h1v3h2v1h-5v-1h2z`} />
    ))}
    <path d="M71.500.500h10v3l-4 5 4 5v4h-10v-4l4-5-4-5zM741.500 9.500l5 5v3h-10v-3z" fill="#f0f0f0" stroke="#606060" />
  </svg>
);

const VerticalRuler = () => (
  <svg width="18" height="491" viewBox="0 0 18 491" className="shrink-0 overflow-visible" fontSize="12">
    <path d="M1 76h17v415H1z" fill="#fff" />
    <path d="M.5.500h17v75H.5z" fill="#f0f0f0" stroke="#a0a0a0" />
    {tenths(-7, 43).map((i) => {
      const y = Math.round(76 + (i * INCH) / 10);
      if (i === 0) return null;
      if (i % 10 === 0)
        return (
          <text key={i} x="16" y={y} textAnchor="middle" transform={`rotate(-90 16 ${y})`}>
            {i / 10}
          </text>
        );
      return i % 5 === 0 ? <path key={i} d={`M8 ${y}h3v1H8z`} /> : <path key={i} d={`M9 ${y}h1v1H9z`} />;
    })}
  </svg>
);

const navButtons = [
  { label: "Previous Page", d: "M1 5h7L4.500 1zM1 9h7L4.500 5z" },
  { label: "Navigation", d: "M2 3.500L3.500 2h2L7 3.500v2L5.500 7h-2L2 5.500z" },
  { label: "Next Page", d: "M1 0h7L4.500 4zM1 4h7L4.500 8z" },
];

const DocumentArea = () => (
  <section className="flex min-w-0 flex-1 flex-col border-t border-[#a0a0a0]">
    <div className="flex min-h-0 flex-1 border-t border-[#696969]">
      <div className="flex min-w-0 flex-1 flex-col">
        <div className="flex h-[25px] shrink-0 items-start">
          <button
            type="button"
            aria-label="Tab Type"
            className="mt-[3px] ml-px flex h-[18px] w-[18px] shrink-0 items-center justify-center border border-[#a0a0a0]"
          >
            <svg width="6" height="6" viewBox="0 0 6 6">
              <path d="M0 0h2v4h4v2H0z" fill="#000" />
            </svg>
          </button>
          <div className="mt-[3px] ml-1.5 flex min-w-0 flex-1 justify-center overflow-hidden pr-px">
            <HorizontalRuler />
          </div>
        </div>
        <div className="flex min-h-0 flex-1">
          <div className="w-[23px] shrink-0 overflow-hidden pt-10 pl-px">
            <VerticalRuler />
          </div>
          <div className="flex min-w-0 flex-1 overflow-hidden border-t border-l border-[#a0a0a0]">
            <div className="flex min-w-0 flex-1 justify-center border-t border-l border-black bg-[#ababab] pt-[37px] pr-px">
              <article className="h-[1058px] w-[818px] shrink-0 border border-black bg-white pt-[76px] pr-[75px] pl-[76px]">
                <div className="h-[900px] border border-[#c0c0c0]">
                  <p className="font-['Liberation_Serif',serif] text-[21px] leading-[22px]">
                    <strong>UPDF</strong> is the best PDF editor
                  </p>
                </div>
              </article>
            </div>
          </div>
        </div>
      </div>
      <div className="flex w-[17px] shrink-0 flex-col items-center pb-px">
        <button type="button" aria-label="Scroll up" className="flex h-[17px] w-[17px] shrink-0 items-center justify-center">
          <Chevron dir="up" />
        </button>
        <div className="flex-1 self-stretch pl-px">
          <div className="h-[48%] bg-[#cdcdcd]" />
        </div>
        <button type="button" aria-label="Scroll down" className="flex h-[17px] w-[17px] shrink-0 items-center justify-center">
          <Chevron />
        </button>
        <div className="flex flex-col gap-0.5 pt-px">
          {navButtons.map((b) => (
            <button
              key={b.label}
              type="button"
              aria-label={b.label}
              className="flex h-[15px] w-[15px] items-center justify-center border border-[#adadad] bg-[#e1e1e1]"
            >
              <svg width="9" height="9" viewBox="0 0 9 9">
                <path d={b.d} />
              </svg>
            </button>
          ))}
        </div>
      </div>
    </div>
    <div className="flex h-[18px] shrink-0 items-start border-t border-b border-t-white border-b-[#e2e2e2]">
      <button type="button" aria-label="Scroll left" className="flex h-[15px] w-[14px] items-center justify-center pr-px">
        <Chevron dir="left" />
      </button>
      <div className="h-[15px] flex-1 bg-[#cdcdcd]" />
      <button type="button" aria-label="Scroll right" className="mr-[18px] flex h-[15px] w-[15px] items-center justify-center">
        <Chevron dir="right" />
      </button>
    </div>
  </section>
);

const Splitter = () => (
  <div className="flex w-[7px] shrink-0 items-center border-l border-white">
    <button type="button" aria-label="Hide sidebar">
      <svg width="5" height="38" viewBox="0 0 5 38" fill="none" stroke="#505050">
        <path d="M.5.500l4 3.500-4 3.500M.5 30.500l4 3.500-4 3.500" />
        <path d="M2.500 10v19" strokeDasharray="2 2" />
      </svg>
    </button>
  </div>
);

/* ---------- sidebar ---------- */

const SectionHeader = ({ title, open }: { title: string; open?: boolean }) => (
  <div className="flex h-[26px] items-center justify-between pr-[5px] pl-[5px]">
    <h3 className="flex items-center gap-[5px] font-bold text-[#222]">
      <svg width="9" height="9" viewBox="0 0 9 9" fill="none" stroke="#333">
        <path d="M.5.500h8v8h-8z" />
        <path d={open ? "M2 4.500h5" : "M2 4.500h5M4.500 2v5"} stroke="#000" />
      </svg>
      <span className="pt-px">{title}</span>
    </h3>
    <button type="button" aria-label={`${title} options`} className="flex gap-0.5">
      <span className="size-0.5 bg-[#222]" />
      <span className="size-0.5 bg-[#222]" />
      <span className="size-0.5 bg-[#222]" />
    </button>
  </div>
);

const Properties = ({ align, setAlign }: AlignProps) => (
  <div className="flex flex-1 flex-col border border-[#a0a0a0]">
    <div className="flex h-[27px] items-start justify-between border-b border-[#a0a0a0] pr-[5px] pl-2.5">
      <h2 className="leading-7 font-bold text-[#222]">Properties</h2>
      <button type="button" aria-label="Close Sidebar Deck" className="pt-[7px]">
        <CloseX />
      </button>
    </div>

    <div className="flex h-[136px] flex-col border-b border-[#a0a0a0]">
      <SectionHeader title="Text" open />
      <div className="flex flex-col gap-1.5 px-[7px] pt-0.5">
        <div className="flex gap-2">
          <Combo label="Sidebar Font Name" options={["Times New Roman"]} className="flex-1" />
          <Combo label="Sidebar Font Size" options={["16"]} className="w-14" />
        </div>
        <div className="flex justify-between pt-px pr-0.5">
          <Group>
            <ToolButton label="Bold"><BoldIcon /></ToolButton>
            <ToolButton label="Italic"><ItalicIcon /></ToolButton>
            <ToolButton label="Underline"><UnderlineIcon /></ToolButton>
            <MenuArrow label="Underline menu" />
            <ToolButton label="Strikethrough"><StrikeIcon /></ToolButton>
            <ToolButton label="Shadow"><ShadowIcon /></ToolButton>
          </Group>
          <Group>
            <ToolButton label="Increase Font"><GrowIcon /></ToolButton>
            <ToolButton label="Reduce Font"><GrowIcon shrink /></ToolButton>
          </Group>
        </div>
        <div className="flex">
          <Group>
            <ToolButton label="Superscript"><ScriptIcon /></ToolButton>
            <ToolButton label="Subscript"><ScriptIcon sub /></ToolButton>
          </Group>
          <span className="w-[13px]" />
          <Group>
            <ToolButton label="Character Spacing"><SpacingIcon /></ToolButton>
            <MenuArrow label="Character Spacing menu" />
          </Group>
          <span className="w-[22px]" />
          <Group>
            <ToolButton label="Font Color"><FontColorIcon /></ToolButton>
            <MenuArrow label="Font Color menu" />
          </Group>
          <span className="w-[9px]" />
          <Group>
            <ToolButton label="Highlighting"><HighlightIcon /></ToolButton>
            <MenuArrow label="Highlighting menu" />
          </Group>
        </div>
      </div>
    </div>

    <div className="flex h-64 flex-col border-b border-[#a0a0a0]">
      <SectionHeader title="Paragraph" open />
      <div className="flex flex-col px-[7px]">
        <Group>
          <AlignButtons align={align} setAlign={setAlign} />
        </Group>
        <div className="mt-[5px] flex gap-[26px]">
          <Group>
            <ToolButton label="Bullets"><BulletsIcon /></ToolButton>
            <MenuArrow label="Bullets menu" />
            <ToolButton label="Numbering"><NumberingIcon /></ToolButton>
            <MenuArrow label="Numbering menu" />
          </Group>
          <Group>
            <ToolButton label="Paragraph Background" width="w-[39px]"><ParaFillIcon /></ToolButton>
            <MenuArrow label="Paragraph Background menu" />
          </Group>
        </div>
        <div className="grid grid-cols-[125px_1fr]">
          <span className="leading-[19px]"><span className="underline">S</span>pacing:</span>
          <span className="leading-[19px]"><span className="underline">I</span>ndent:</span>
          <Group>
            <ToolButton label="Increase Spacing"><ParaGapIcon /></ToolButton>
            <ToolButton label="Decrease Spacing"><ParaGapIcon shrink /></ToolButton>
          </Group>
          <Group>
            <ToolButton label="Decrease Indent"><IndentIcon /></ToolButton>
            <ToolButton label="Increase Indent"><IndentIcon right /></ToolButton>
            <ToolButton label="Hanging Indent" width="w-[30px]"><HangingIcon /></ToolButton>
          </Group>
        </div>
        <div className="mt-[11px] grid grid-cols-[118px_1fr] gap-x-[7px] gap-y-2">
          <Spinner label="Above Paragraph Spacing" icon={<AboveIcon />} />
          <Spinner label="Before Text Indent" icon={<BeforeTextIcon />} />
          <Spinner label="Below Paragraph Spacing" icon={<AboveIcon below />} />
          <Spinner label="After Text Indent" icon={<BeforeTextIcon after />} />
        </div>
        <div className="mt-[7px] grid grid-cols-[118px_1fr] items-start gap-x-[7px]">
          <Group>
            <ToolButton label="Line Spacing" width="w-[27px]"><LineGapIcon /></ToolButton>
            <MenuArrow label="Line Spacing menu" />
          </Group>
          <div className="pt-0.5">
            <Spinner label="First Line Indent" icon={<FirstLineIcon />} />
          </div>
        </div>
      </div>
    </div>

    <div className="border-b border-[#a0a0a0]">
      <SectionHeader title="Page" />
    </div>
  </div>
);

const decks = [
  {
    name: "Properties",
    art: (
      <>
        <ellipse cx="13" cy="21.500" rx="9" ry="2" fill="#c9c9c9" />
        <path d="M2 5l10-4 4 2v6l-5 2v9l-9-4z" fill="#1e9de0" />
        <path d="M12 5l10-2v14l-10 5-5-2v-8l5-2z" fill="#74cc1c" />
        <path d="M2 5l7 2 6-3M9 7v4M2 11l6 2 4-2M15 6v4l7-1M12 6l10-2M7 13l5 2 5-3M12 15v7M17 12v7M7 3l5 2" stroke="#fff" strokeWidth="1.100" />
      </>
    ),
  },
  {
    name: "Styles",
    art: (
      <>
        <ellipse cx="12" cy="22" rx="9" ry="1.500" fill="#cfcfcf" />
        <path d="M5 20L7 8c3-4 9-3 11 2l-5 6z" fill="#123f7a" />
        <path d="M5 20c0-4 4-8 7-7s3 4 1 6z" fill="#2c82d0" />
        <path d="M12 14c3 0 5-2 6-4 2 4 3 7 1 10-3 2-6 0-7-2z" fill="#68a838" />
        <path d="M2 5c2-4 7-4 8 0L8 8 6 6z" fill="#d8641a" />
        <path d="M19 1l1.200 2.500 2.800.3-2 2 .5 2.700L19 7.200l-2.500 1.300.5-2.700-2-2 2.800-.3z" fill="#ffc23a" />
        <circle cx="12.500" cy="2.500" r="2.200" fill="#c765e0" />
        <circle cx="3" cy="10.500" r="2.200" fill="#ee6fc4" />
        <circle cx="21" cy="12" r="2.200" fill="#f08a8a" />
      </>
    ),
  },
  {
    name: "Gallery",
    art: (
      <>
        <ellipse cx="13" cy="22" rx="8" ry="1.500" fill="#d2d2d2" />
        <path d="M1 7l12-6 6 7-12 8z" fill="#fff" stroke="#a8b8a8" />
        <path d="M3 7.500l9.500-4.500 2 2.500L5 11z" fill="#70c23c" />
        <path d="M4 12L17 4l6 7-12 9z" fill="#fff" stroke="#b0b8be" />
        <path d="M6.500 12.500L16.500 6l4 5-9.500 6.500z" fill="#4ca3e0" />
        <path d="M9 15l4-2 2-3 5.500 1-9.500 6.500z" fill="#6b9c34" />
        <path d="M11 11l2.500-1-.5 3z" fill="#fff" />
      </>
    ),
  },
  {
    name: "Navigator",
    art: (
      <>
        <circle cx="12" cy="12" r="9.800" fill="#f7f9fa" stroke="#e08a12" strokeWidth="2.600" />
        <circle cx="12" cy="12" r="10" stroke="#f9bd48" strokeWidth="1" />
        <path d="M10 7.500V4l3 3.500V4" stroke="#222" />
        <path d="M18 7l-8 3 4 4z" fill="#e23d28" />
        <path d="M6 18l4-8 4 4z" fill="#2a7fc4" />
      </>
    ),
  },
];

const TabBar = () => {
  const [current, setCurrent] = useState("Properties");
  return (
    <div className="flex w-[38px] shrink-0 flex-col items-center">
      <button type="button" aria-label="Sidebar Settings" className="mt-2 h-[17px]">
        <svg width="16" height="17" viewBox="0 0 16 17">
          <path d="M0 .500h16M0 4.500h16M0 8.500h16" stroke="#3c4852" strokeWidth="1.600" />
          <path d="M8 12h7l-3.500 4z" />
        </svg>
      </button>
      <span className="mt-2.5 mb-[3px] h-px w-[23px] bg-[#a0a0a0]" />
      <div className="flex flex-col gap-1">
        {decks.map((d) => (
          <button
            key={d.name}
            type="button"
            aria-label={d.name}
            onClick={() => setCurrent(d.name)}
            className={clsx(
              "flex h-[31px] w-8 items-center justify-center rounded-[3px] border",
              current === d.name ? "border-[#a8a8a8]" : "border-transparent"
            )}
          >
            <Svg w={24} h={24}>{d.art}</Svg>
          </button>
        ))}
      </div>
    </div>
  );
};

const Sidebar = (props: AlignProps) => (
  <aside className="mr-px flex w-[295px] shrink-0 border border-[#a0a0a0] pt-[3px] pb-0.5 pl-[3px]">
    <Properties {...props} />
    <TabBar />
  </aside>
);

/* ---------- status bar ---------- */

const StatusCell = ({ children, className }: { children?: ReactNode; className: string }) => (
  <span className={clsx("flex h-4 items-center border-r border-[#a0a0a0]", className)}>{children}</span>
);

const StatusBar = () => {
  const [zoom, setZoom] = useState(49);
  return (
    <footer className="flex h-[21px] shrink-0 items-end border-t border-white">
      <StatusCell className="w-[225px] pl-1.5">Page 1 / 1</StatusCell>
      <StatusCell className="w-[209px] pl-[5px]">Default</StatusCell>
      <StatusCell className="w-[242px] justify-center pr-1">English (USA)</StatusCell>
      <StatusCell className="w-11 pl-1">INSRT</StatusCell>
      <StatusCell className="w-[33px] pl-1">STD</StatusCell>
      <StatusCell className="w-4 pl-0.5">*</StatusCell>
      <StatusCell className="w-[29px]" />
      <StatusCell className="flex-1" />
      <StatusCell className="w-[76px] gap-[5px] pl-[7px]">
        <button type="button" aria-label="Single page">
          <Svg w={10} h={12}>
            <path d="M.5.500h5.500l3 3v8H.5z" fill="#f4f8fa" stroke="#8795a1" />
            <path d="M6 .500v3h3" stroke="#8795a1" />
          </Svg>
        </button>
        <button type="button" aria-label="Multiple pages">
          <Svg w={20} h={12}>
            <path d="M.5.500h5.500l3 3v8H.5zM10.500.500H16l3 3v8h-8.500z" fill="#b9d8f0" stroke="#1f5486" />
            <path d="M6 .500v3h3M16 .500v3h3" stroke="#1f5486" />
          </Svg>
        </button>
        <button type="button" aria-label="Book view">
          <Svg w={18} h={12}>
            <path d="M3 .500h6v11H.5V3zM9 .500h6L17.500 3v8.500H9z" fill="#f4f8fa" stroke="#8795a1" />
            <path d="M3 .500V3H.5M15 .500V3h2.500" stroke="#8795a1" />
          </Svg>
        </button>
      </StatusCell>
      <StatusCell className="w-[143px] gap-[5px] pl-1">
        <button type="button" aria-label="Zoom out" onClick={() => setZoom(zoom - 5)}>
          <Svg w={12} h={12}>
            <circle cx="6" cy="6" r="5.400" fill="#fff" stroke="#6b7b88" />
            <path d="M3 6h6" stroke="#1a4070" strokeWidth="1.500" />
          </Svg>
        </button>
        <input
          type="range"
          aria-label="Zoom"
          value={zoom}
          onChange={(e) => setZoom(Number(e.target.value))}
          className="h-3 w-[97px] appearance-none bg-[linear-gradient(#808080,#808080),linear-gradient(#808080,#808080),linear-gradient(#fff,#fff),linear-gradient(#808080,#808080)] bg-[size:1px_11px,1px_11px,95px_1px,97px_3px] bg-[position:16px_center,47px_center,center,center] bg-no-repeat outline-none [&::-webkit-slider-thumb]:size-[9px] [&::-webkit-slider-thumb]:appearance-none [&::-webkit-slider-thumb]:rounded-full [&::-webkit-slider-thumb]:border [&::-webkit-slider-thumb]:border-[#5f6f86] [&::-webkit-slider-thumb]:bg-[#a4c4f0]"
        />
        <button type="button" aria-label="Zoom in" onClick={() => setZoom(zoom + 5)}>
          <Svg w={12} h={12}>
            <circle cx="6" cy="6" r="5.400" fill="#fff" stroke="#6b7b88" />
            <path d="M3 6h6M6 3v6" stroke="#1a4070" strokeWidth="1.500" />
          </Svg>
        </button>
      </StatusCell>
      <span className="flex h-4 w-[45px] items-center pl-1 text-[11px]">100 %</span>
    </footer>
  );
};

export default function App() {
  const [align, setAlign] = useState<Align>("left");

  return (
    <div className="flex h-screen flex-col overflow-hidden bg-[#f0f0f0] font-['Open_Sans','Noto_Sans',sans-serif] text-xs text-black">
      <div className="shrink-0 bg-white">
        <TitleBar />
        <MenuBar />
        <StandardBar />
        <FormattingBar align={align} setAlign={setAlign} />
      </div>
      <main className="flex min-h-0 flex-1">
        <DocumentArea />
        <Splitter />
        <Sidebar align={align} setAlign={setAlign} />
      </main>
      <StatusBar />
    </div>
  );
}
